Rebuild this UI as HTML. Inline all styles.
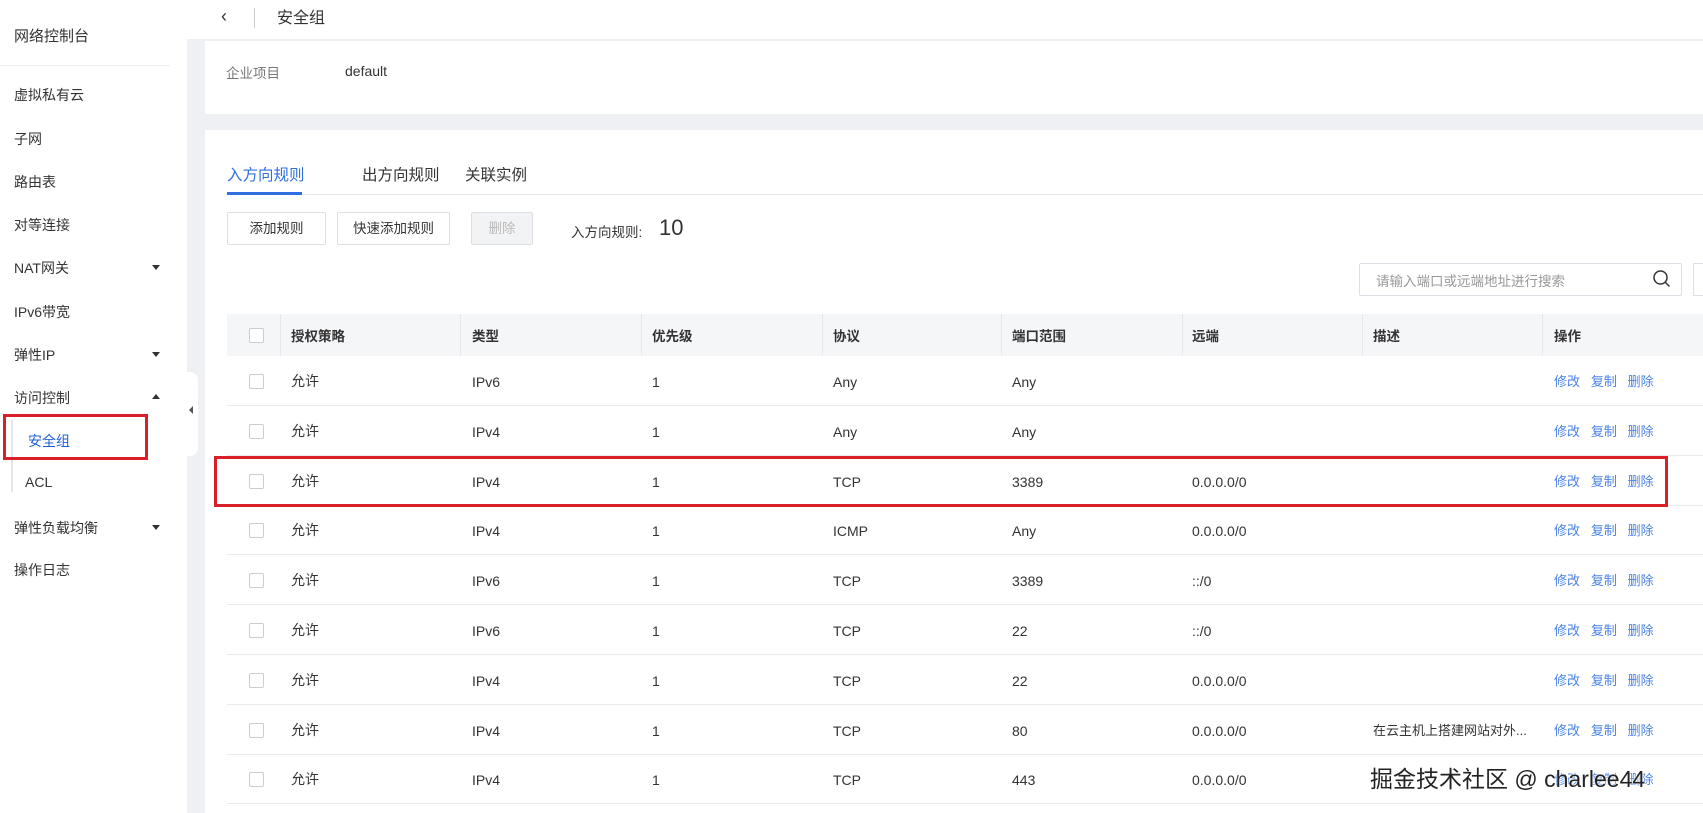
<!DOCTYPE html>
<html><head><meta charset="utf-8"><style>
*{box-sizing:border-box;margin:0;padding:0}
body{width:1703px;height:813px;overflow:hidden;background:#eef0f3;font-family:"Liberation Sans","Noto Sans CJK SC",sans-serif;color:#333;font-size:14px;position:relative}
.a{position:absolute;white-space:nowrap}
.side{position:absolute;left:0;top:0;width:187px;height:813px;background:#fff}
.side .it{position:absolute;left:14px;font-size:14px;color:#333}
.tri{position:absolute;left:152px;width:0;height:0;border-left:4px solid transparent;border-right:4px solid transparent}
.card{position:absolute;background:#fff}
.btn{position:absolute;top:212px;height:33px;border:1px solid #dcdfe6;border-radius:2px;font-size:13.5px;text-align:center;line-height:31px;color:#333;background:#fff}
.th{position:absolute;top:314px;height:42px;left:227px;right:0;background:#f5f6f8}
.sep{position:absolute;top:314px;height:42px;width:1px;background:#e6e8eb}
.cb{position:absolute;left:249px;width:15px;height:15px;border:1px solid #c9cdd4;border-radius:2px;background:#fff}
.rl{position:absolute;left:227px;right:0;height:1px;background:#e8eaed}
.lnk{color:#4a82e6}
</style></head><body>
<div class="side">
<div class="it" style="top:25px;font-size:15px">网络控制台</div>
<div style="position:absolute;left:0;top:65px;width:170px;height:1px;background:#eee"></div>
<div class="it" style="top:85px">虚拟私有云</div>
<div class="it" style="top:129px">子网</div>
<div class="it" style="top:172px">路由表</div>
<div class="it" style="top:215px">对等连接</div>
<div class="it" style="top:258px">NAT网关</div><div class="tri" style="top:265px;border-top:5px solid #333"></div>
<div class="it" style="top:302px">IPv6带宽</div>
<div class="it" style="top:345px">弹性IP</div><div class="tri" style="top:352px;border-top:5px solid #333"></div>
<div class="it" style="top:388px">访问控制</div><div class="tri" style="top:394px;border-bottom:5px solid #333"></div>
<div style="position:absolute;left:11px;top:420px;width:2px;height:72px;background:#e3e5e8"></div>
<div class="it" style="top:431px;left:28px;color:#1f5fd6">安全组</div>
<div class="it" style="top:474px;left:25px">ACL</div>
<div class="it" style="top:518px">弹性负载均衡</div><div class="tri" style="top:525px;border-top:5px solid #333"></div>
<div class="it" style="top:560px">操作日志</div>
<div style="position:absolute;left:3px;top:414px;width:145px;height:46px;border:3px solid #d9202a"></div>
</div>
<div style="position:absolute;left:187px;top:372px;width:11px;height:84px;background:#fff;border-radius:0 8px 8px 0"></div>
<div class="a" style="left:189px;top:406px;width:0;height:0;border-top:4px solid transparent;border-bottom:4px solid transparent;border-right:4px solid #555"></div>
<div class="card" style="left:187px;top:0;right:0;height:39px"></div>
<div class="a" style="left:221px;top:6px;font-size:18px;color:#333">‹</div>
<div class="a" style="left:254px;top:8px;width:1px;height:20px;background:#ccc"></div>
<div class="a" style="left:277px;top:4px;font-size:16px">安全组</div>
<div class="card" style="left:205px;top:41px;right:0;height:73px"></div>
<div class="a" style="left:226px;top:62px;font-size:13.5px;color:#777">企业项目</div>
<div class="a" style="left:345px;top:63px;font-size:14px">default</div>
<div class="card" style="left:205px;top:130px;right:0;bottom:0"></div>
<div class="a" style="left:227px;top:163px;font-size:15.5px;color:#2f6fe0">入方向规则</div>
<div class="a" style="left:362px;top:163px;font-size:15.5px">出方向规则</div>
<div class="a" style="left:465px;top:163px;font-size:15.5px">关联实例</div>
<div class="a" style="left:227px;top:194px;right:0;height:1px;background:#e6e8eb"></div>
<div class="a" style="left:227px;top:192px;width:75px;height:3px;background:#2f6fe0"></div>
<div class="btn" style="left:227px;width:99px">添加规则</div>
<div class="btn" style="left:337px;width:113px">快速添加规则</div>
<div class="btn" style="left:471px;width:62px;background:#f2f3f5;color:#bbb">删除</div>
<div class="a" style="left:571px;top:221px;font-size:13.5px">入方向规则:</div>
<div class="a" style="left:659px;top:215px;font-size:22px">10</div>
<div class="a" style="left:1359px;top:263px;width:323px;height:33px;border:1px solid #dcdfe6;border-radius:2px"></div>
<div class="a" style="left:1376px;top:270px;font-size:13.5px;color:#999">请输入端口或远端地址进行搜索</div>
<svg class="a" style="left:1652px;top:269px" width="20" height="20" viewBox="0 0 20 20"><circle cx="8.5" cy="8.5" r="6.5" fill="none" stroke="#333" stroke-width="1.5"/><path d="M13.5 13.5l4 4" stroke="#333" stroke-width="1.5"/></svg>
<div class="a" style="left:1693px;top:263px;width:20px;height:33px;border:1px solid #dcdfe6"></div>
<div class="th"></div>
<div class="sep" style="left:280px"></div><div class="sep" style="left:460px"></div><div class="sep" style="left:641px"></div><div class="sep" style="left:822px"></div><div class="sep" style="left:1001px"></div><div class="sep" style="left:1182px"></div><div class="sep" style="left:1362px"></div><div class="sep" style="left:1542px"></div>
<div class="cb" style="top:328px"></div>
<div class="a" style="top:325px;left:291px;font-weight:bold;font-size:13.5px">授权策略</div>
<div class="a" style="top:325px;left:472px;font-weight:bold;font-size:13.5px">类型</div>
<div class="a" style="top:325px;left:652px;font-weight:bold;font-size:13.5px">优先级</div>
<div class="a" style="top:325px;left:833px;font-weight:bold;font-size:13.5px">协议</div>
<div class="a" style="top:325px;left:1012px;font-weight:bold;font-size:13.5px">端口范围</div>
<div class="a" style="top:325px;left:1192px;font-weight:bold;font-size:13.5px">远端</div>
<div class="a" style="top:325px;left:1373px;font-weight:bold;font-size:13.5px">描述</div>
<div class="a" style="top:325px;left:1554px;font-weight:bold;font-size:13.5px">操作</div>
<div id="rows"></div>
<script>
var d=[["IPv6","Any","Any",""],["IPv4","Any","Any",""],["IPv4","TCP","3389","0.0.0.0/0"],["IPv4","ICMP","Any","0.0.0.0/0"],["IPv6","TCP","3389","::/0"],["IPv6","TCP","22","::/0"],["IPv4","TCP","22","0.0.0.0/0"],["IPv4","TCP","80","0.0.0.0/0","在云主机上搭建网站对外..."],["IPv4","TCP","443","0.0.0.0/0",""]];
var h="";
d.forEach(function(r,i){var c=381+i*49.8;var t=c-10;var tl=c-7;
h+='<div class="cb" style="top:'+(c-7)+'px"></div>';
h+='<div class="a" style="top:'+t+'px;left:291px">允许</div>';
h+='<div class="a" style="top:'+tl+'px;left:472px">'+r[0]+'</div>';
h+='<div class="a" style="top:'+tl+'px;left:652px">1</div>';
h+='<div class="a" style="top:'+tl+'px;left:833px">'+r[1]+'</div>';
h+='<div class="a" style="top:'+tl+'px;left:1012px">'+r[2]+'</div>';
h+='<div class="a" style="top:'+tl+'px;left:1192px">'+r[3]+'</div>';
if(r[4])h+='<div class="a" style="top:'+t+'px;left:1373px;font-size:13px">'+r[4]+'</div>';
h+='<div class="a lnk" style="top:'+t+'px;left:1554px;font-size:13px">修改&nbsp;&nbsp;&nbsp;复制&nbsp;&nbsp;&nbsp;删除</div>';
h+='<div class="rl" style="top:'+(c+24)+'px"></div>';});
document.getElementById("rows").innerHTML=h;
</script>
<div class="a" style="left:214px;top:456px;width:1454px;height:51px;border:3px solid #d9202a"></div>
<div class="a" style="left:1370px;top:760px;font-size:23px;color:#222;text-shadow:0 0 2px #fff,0 0 2px #fff">掘金技术社区 @ charlee44</div>
</body></html>
